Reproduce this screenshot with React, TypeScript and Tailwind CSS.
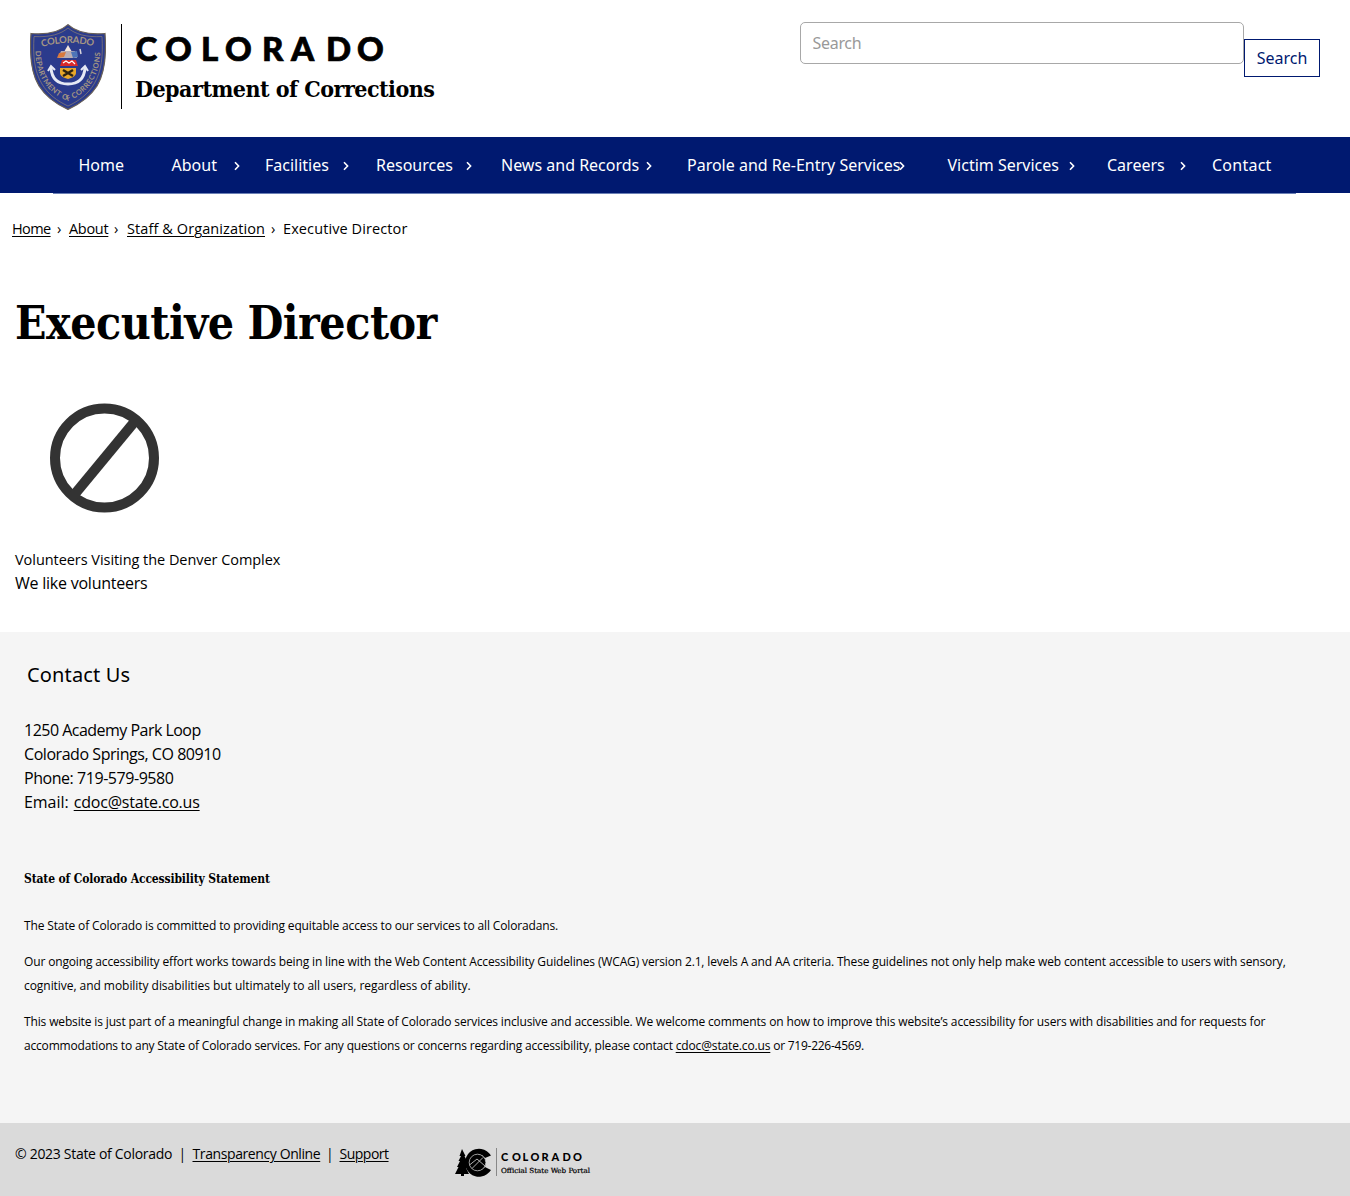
const body = "font-['Open_Sans',sans-serif]";
const ui = "font-['Noto_Sans',sans-serif]";
const slab = "font-['DejaVu_Serif_Condensed','DejaVu_Serif',serif] font-bold";
const link = "underline decoration-1 underline-offset-[1.5px]";

function Seal() {
  return (
    <svg width="76" height="86" viewBox="0 0 76 86" className="shrink-0">
      <defs>
        <path id="arcTop" d="M12 23 Q38 15 66 23" />
        <path id="arcLow" d="M5.500 27 C6 54 18 69 38 77 C58 69 70 54 70.500 24" />
      </defs>
      <path d="M38 .6C31 7 20 11 1 9.500C-.5 30 .5 48 9 62C16 73 26 80 38 85.400C50 80 60 73 67 62C75.500 48 76.500 30 75 9.500C56 11 45 7 38 .6Z" fill="#2b3b8c" stroke="#6b6258" strokeWidth="1.200" />
      <path d="M38 4C31 10 20 13.500 4 12.500C3 31 4 47 12 60C18 70 27 77 38 82C49 77 58 70 64 60C72 47 73 31 72 12.500C56 13.500 45 10 38 4Z" fill="none" stroke="#8d7f72" strokeWidth=".7" />
      <text fontFamily="Lato" fontWeight="700" fontSize="9.500" fill="#a59683"><textPath href="#arcTop" textLength="52">COLORADO</textPath></text>
      <text fontFamily="Lato" fontWeight="700" fontSize="7.400" fill="#a59683"><textPath href="#arcLow" textLength="126">DEPARTMENT OF CORRECTIONS</textPath></text>
      <path d="M38 21L42 28H34Z" fill="#f3e6dd" />
      <path d="M31 27H45L47 34H28Z" fill="#b9aeb4" />
      <path d="M29 29L36 28L34 33L27 34Z" fill="#d9793c" />
      <path d="M41 28L47 27L48 33L43 34Z" fill="#4d75b8" />
      <path d="M50 25L51 30" stroke="#d8d4dc" strokeWidth="1.500" />
      <path d="M32 36H46L48 42H30Z" fill="#d92a2a" />
      <path d="M33 39L36 37L39 39L42 37L45 40" fill="none" stroke="#fff" strokeWidth="1.200" />
      <path d="M30 44H46V49C46 52 42 54 38 55C34 54 30 52 30 49Z" fill="#e8a72a" />
      <path d="M33 46L43 52M43 46L33 52" stroke="#2d2212" strokeWidth="2.400" />
      <path d="M21 44C22 57 30 60 38 60C46 60 54 57 55 44" fill="none" stroke="#e6e9f4" strokeWidth="3" />
      <path d="M18 47L21 42L25 46M51 46L55 42L58 47" fill="none" stroke="#e6e9f4" strokeWidth="2" />
    </svg>
  );
}

function PortalMark() {
  return (
    <svg width="138" height="30" viewBox="0 0 138 30" className="shrink-0">
      <path d="M7 1L10.500 8H9.500L12.500 14L11 20L14 26H9V28H6V26H0L3.500 19H2L5 13H3.500L6 8H4.500Z" fill="#000" />
      <path d="M36 7.500A14 14 0 1 0 36 22L30 19A8 8 0 1 1 30 10Z" fill="#000" />
      <circle cx="22.500" cy="14.500" r="8.500" fill="#000" />
      <circle cx="22.500" cy="14.500" r="8.300" fill="none" stroke="#dadada" strokeWidth=".7" />
      <path d="M17 20.500L28 9.500M14.500 17L22 11L30 18" fill="none" stroke="#dadada" strokeWidth=".8" />
      <path d="M41.500 0V28" stroke="#888" strokeWidth="1" />
      <text x="46 57 67.500 75.500 86.500 96.500 107.500 118" y="12.500" fontFamily="Lato" fontWeight="900" fontSize="11">COLORADO</text>
      <text x="46" y="24.500" fontFamily="DejaVu Serif Condensed" fontWeight="400" stroke="#000" strokeWidth=".2" fontSize="7" textLength="89" lengthAdjust="spacingAndGlyphs">Official State Web Portal</text>
    </svg>
  );
}

function Chevron() {
  return (
    <svg width="6" height="10" viewBox="0 0 6 10" className="mt-[2px] shrink-0" fill="none" stroke="#fff" strokeWidth="1.600">
      <path d="M1 1.200L4.600 5L1 8.800" />
    </svg>
  );
}

const nav = [
  { label: "Home", item: "w-[93px]", text: "" },
  { label: "About", item: "w-[93.5px]", text: "w-[62px]" },
  { label: "Facilities", item: "w-[111px]", text: "w-[78px]" },
  { label: "Resources", item: "w-[125px]", text: "w-[90px]" },
  { label: "News and Records", item: "w-[186px]", text: "w-[144.5px]" },
  { label: "Parole and Re-Entry Services", item: "w-[260.5px]", text: "w-[211.5px]" },
  { label: "Victim Services", item: "w-[159.5px]", text: "w-[121.5px]" },
  { label: "Careers", item: "w-[105px]", text: "w-[72.5px]" },
  { label: "Contact", item: "tracking-[0.25px]", text: "" },
];

export default function App() {
  return (
    <div className={`flex h-[1196px] w-[1350px] flex-col bg-white text-black ${body}`}>
      <header className="flex h-[137px] justify-between pl-[29.5px] pr-[30px]">
        <a className="flex pt-[23.5px]">
          <Seal />
          <span className="ml-[15.5px] mt-[0.5px] h-[85px] w-px bg-black" />
          <span className="-mt-[0.5px] ml-[13px] flex flex-col">
            <svg width="260" height="44" viewBox="0 0 260 44">
              <text x=".5 30 66 90 127 156 191 222" y="38" fontFamily="Lato" fontWeight="900" fontSize="33" stroke="#000" strokeWidth=".7">COLORADO</text>
            </svg>
            <span className={`mt-[7px] text-[23px] leading-[30px] tracking-[-0.5px] ${slab}`}>Department of Corrections</span>
          </span>
        </a>
        <form className={`flex pt-[22px] ${ui}`}>
          <input placeholder="Search" className="h-[42px] w-[444.5px] rounded-[5px] border border-[#a8a8a8] pl-3 text-[16px] tracking-[-0.3px] placeholder:text-[#999]" />
          <button className="mt-[17px] h-[38px] w-[76px] border border-[#001970] text-[16px] text-[#001970]">Search</button>
        </form>
      </header>
      <nav className={`h-[56px] shrink-0 bg-[#001970] pl-[78.5px] ${ui}`}>
        <ul className="flex h-full items-center text-[16px] text-white">
          {nav.map((n) => (
            <li key={n.label} className={`flex shrink-0 items-center whitespace-nowrap ${n.item}`}>
              <span className={n.text}>{n.label}</span>
              {n.text && <Chevron />}
            </li>
          ))}
        </ul>
      </nav>
      <div className="ml-[53px] h-px w-[1243px] shrink-0 bg-[#6b80b5]" />
      <main className="flex h-[438px] shrink-0 flex-col">
        <div className="mt-6 flex h-[22px] items-center pl-3 text-[14.5px] leading-[22px] tracking-[0.1px]">
          <a className="w-[57px]"><span className="inline-block w-[45px] tracking-[-0.6px]"><span className={link}>Home</span></span>›</a>
          <a className="w-[58px]"><span className="inline-block w-[45px] tracking-[-0.3px]"><span className={link}>About</span></span>›</a>
          <a className="w-[156px]"><span className="inline-block w-[144px]"><span className={link}>Staff &amp; Organization</span></span>›</a>
          <span>Executive Director</span>
        </div>
        <h1 className={`mt-[53px] pl-[15px] text-[46px] leading-[60px] tracking-[-0.5px] ${slab}`}>Executive Director</h1>
        <svg width="110" height="110" viewBox="0 0 110 110" className="ml-[50px] mt-[50px] shrink-0" fill="none" stroke="#333" strokeWidth="10">
          <circle cx="54.500" cy="55" r="49.500" />
          <path d="M24 92L86 17" />
        </svg>
        <p className="mt-[35px] pl-[15px] text-[14.5px] leading-[23px] tracking-[-0.05px]">Volunteers Visiting the Denver Complex</p>
        <p className="pl-[15px] text-[16px] leading-6 tracking-[-0.23px]">We like volunteers</p>
      </main>
      <section className="h-[491px] shrink-0 bg-[#f5f5f5] px-6 pt-[28px]">
        <h2 className={`pl-[3px] text-[20px] leading-[30px] tracking-[0.15px] ${ui}`}>Contact Us</h2>
        <address className="mt-[28px] text-[16px] not-italic leading-6 tracking-[-0.45px]">
          <span className="tracking-[-0.52px]">1250 Academy Park Loop</span><br />Colorado Springs, CO 80910<br />Phone: 719-579-9580<br />
          <span className="tracking-[-0.05px]">Email: </span><a className={`ml-px tracking-[-0.2px] ${link}`}>cdoc@state.co.us</a>
        </address>
        <h3 className={`mt-[53px] text-[12px] leading-6 tracking-[-0.14px] ${slab}`}>State of Colorado Accessibility Statement</h3>
        <div className="mt-[23px] flex flex-col gap-3 whitespace-nowrap text-[12px] leading-6 tracking-[-0.138px]">
          <p>The State of Colorado is committed to providing equitable access to our services to all Coloradans.</p>
          <p><span className="tracking-[-0.147px]">Our ongoing accessibility effort works towards being in line with the Web Content Accessibility Guidelines (WCAG) version 2.1, levels A and AA criteria. These guidelines not only help make web content accessible to users with sensory,</span><br /><span className="tracking-[-0.05px]">cognitive, and mobility disabilities but ultimately to all users, regardless of ability.</span></p>
          <p>This website is just part of a meaningful change in making all State of Colorado services inclusive and accessible. We welcome comments on how to improve this website’s accessibility for users with disabilities and for requests for<br /><span className="tracking-[-0.18px]">accommodations to any State of Colorado services. For any questions or concerns regarding accessibility, please contact </span><a className={link}>cdoc@state.co.us</a><span className="tracking-[-0.25px]"> or 719-226-4569.</span></p>
        </div>
      </section>
      <footer className="flex h-[73px] shrink-0 bg-[#dadada] pl-[15px] pt-[20px]">
        <div className="flex w-[440px] text-[14px] leading-[22px] tracking-[-0.3px]">
          <span className="w-[163.5px]">© 2023 State of Colorado</span>
          <span className="w-[14px]">|</span>
          <a className="w-[133.5px] tracking-[-0.4px]"><span className={link}>Transparency Online</span></a>
          <span className="w-[13.5px]">|</span>
          <a className={`tracking-[-0.5px] ${link}`}>Support</a>
        </div>
        <div className="pt-[5px]"><PortalMark /></div>
      </footer>
    </div>
  );
}
